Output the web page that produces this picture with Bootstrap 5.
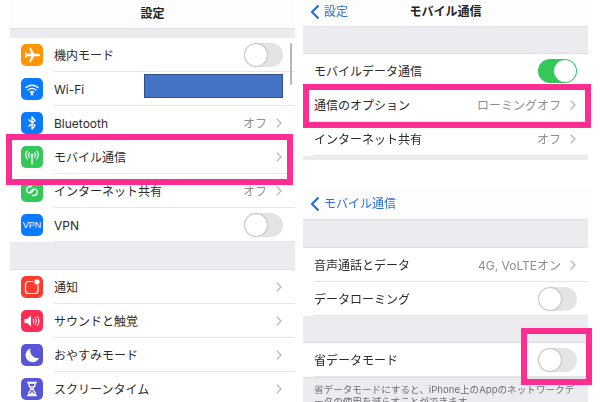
<!DOCTYPE html>
<html lang="ja">
<head>
  <meta charset="UTF-8">
  <title>設定</title>
  <link href="https://cdn.jsdelivr.net/npm/bootstrap@5.3.3/dist/css/bootstrap.min.css" rel="stylesheet">
  <style>
    html, body { height: 402px; overflow: hidden; }
    body { background: #fff; color: #2b2b2b; font-family: Inter, "Noto Sans CJK JP", "Liberation Sans", sans-serif; font-size: 12px; line-height: 1; }
    .stage { width: 600px; height: 402px; overflow: hidden; filter: blur(.3px); }
    .pane { width: 285px; flex: none; }
    .pane-left { margin-left: 10px; margin-right: 8px; }
    .topbar { background: #fdfdfd; border-bottom: 1px solid #e2e2e6; font-weight: 700; font-size: 12px; color: #222; }
    .topbar-a { height: 29px; padding-bottom: 1px; }
    .topbar-b { height: 27px; padding-bottom: 2px; }
    .topbar-c { height: 32px; }
    .back-link { left: 7px; top: 0; bottom: 0; color: #2b6fe0; font-weight: 400; }
    .topbar-b .back-link { padding-bottom: 3px; }
    .gap-xs { height: 9px; background: #ebebf0; }
    .gap-lg { height: 28px; background: #ebebf0; border-bottom: 1px solid #dedee2; }
    .gap-md { height: 27px; background: #ebebf0; border-bottom: 1px solid #dedee2; }
    .gap-sm { height: 4px; background: #ebebf0; }
    .gap-white { height: 28px; background: #fff; }
    .cell { height: 34px; background: #fff; }
    .cell-body { height: 34px; border-bottom: 1px solid #e6e6e8; padding-right: 12px; }
    .cell-body > span:first-child { margin-top: 2px; }
    .cell:last-child .cell-body { border-bottom: 0; }
    .pane-right .cell { padding-left: 11px; }
    .pane-right .cell-body { padding-right: 11px; }
    .app-icon { width: 22px; height: 22px; border-radius: 5px; margin: 0 11px; flex: none; }
    .app-icon svg { display: block; }
    .vpn-text { font-family: "Liberation Sans", sans-serif; font-size: 9px; color: #fff; }
    .c-orange { background: #ff9500; }
    .c-blue { background: #0a7aff; }
    .c-green { background: #34c759; }
    .c-red { background: #ff3b30; }
    .c-pink { background: #ff2d55; }
    .c-indigo { background: #5856d6; }
    .val { color: #8e8e93; margin: 2px 9px 0 0; }
    .chev { margin-right: 1px; }
    .sw { width: 39px; height: 24px; border-radius: 12px; background: #e4e4e6; flex: none; }
    .sw-on { background: #34c759; }
    .sw-knob { width: 22px; height: 22px; border-radius: 50%; background: #fff; box-shadow: 0 0 2px rgba(0,0,0,.45); top: 1px; left: 1px; }
    .sw-on .sw-knob { left: 16px; box-shadow: none; }
    .note { background: #ebebf0; color: #6d6d72; font-size: 9.600px; line-height: 12px; padding: 6px 10px 0 11px; height: 40px; border-top: 1px solid #dedee2; line-break: anywhere; }
    .mark-box { border: 6.500px solid #ff2d92; }
    .mark-a { left: 6px; top: 134px; width: 287px; height: 51px; }
    .mark-b { left: 303px; top: 84px; width: 288px; height: 44px; }
    .mark-c { left: 521px; top: 328px; width: 71px; height: 57px; }
    .hide-rect { left: 144px; top: 74px; width: 139px; height: 24px; background: #4472c4; border: 1.500px solid #2f528f; }
    .scroll-thumb { left: 290px; top: 43px; width: 2px; height: 42px; background: #b5b5b8; border-radius: 1px; }
  </style>
</head>
<body>
  <div class="stage d-flex position-relative">

    <div class="pane pane-left">
      <div class="topbar topbar-a d-flex align-items-center justify-content-center">設定</div>
      <div class="gap-xs"></div>

      <div class="cell d-flex align-items-center">
        <span class="app-icon c-orange d-flex align-items-center justify-content-center">
          <svg width="18" height="18" viewBox="0 0 18 18"><path fill="#fff" d="M17 9c0-.8-.9-1.300-2-1.300h-3.600L7.600 1.600H6.200l1.900 6.100H4.300L3 6H1.900l.7 3-.7 3H3l1.300-1.700h3.800l-1.900 6.100h1.400l3.800-6.100H15c1.100 0 2-.5 2-1.300z"/></svg>
        </span>
        <div class="cell-body flex-grow-1 d-flex align-items-center justify-content-between">
          <span>機内モード</span>
          <span class="sw position-relative"><span class="sw-knob position-absolute"></span></span>
        </div>
      </div>
      <div class="cell d-flex align-items-center">
        <span class="app-icon c-blue d-flex align-items-center justify-content-center">
          <svg width="18" height="18" viewBox="0 0 18 18" fill="none" stroke="#fff" stroke-width="1.500" stroke-linecap="round"><path d="M3 7.500a9 9 0 0 1 12 0"/><path d="M5.200 10a5.700 5.700 0 0 1 7.600 0"/><path d="M7.400 12.300a2.500 2.500 0 0 1 3.200 0"/><circle cx="9" cy="14.300" r=".5" fill="#fff"/></svg>
        </span>
        <div class="cell-body flex-grow-1 d-flex align-items-center"><span>Wi-Fi</span></div>
      </div>
      <div class="cell d-flex align-items-center">
        <span class="app-icon c-blue d-flex align-items-center justify-content-center">
          <svg width="18" height="18" viewBox="0 0 18 18" fill="none" stroke="#fff" stroke-width="1.300" stroke-linejoin="round"><path d="M5.500 5.500 12 11.500 9 15V3l3 3.500-6.500 6"/></svg>
        </span>
        <div class="cell-body flex-grow-1 d-flex align-items-center justify-content-between">
          <span>Bluetooth</span>
          <span class="d-flex align-items-center"><span class="val">オフ</span>
            <svg class="chev" width="6" height="10" viewBox="0 0 6 10" fill="none" stroke="#b8b8bc" stroke-width="1.300"><path d="M.8.8 5 5 .8 9.200"/></svg></span>
        </div>
      </div>
      <div class="cell d-flex align-items-center">
        <span class="app-icon c-green d-flex align-items-center justify-content-center">
          <svg width="18" height="18" viewBox="0 0 18 18" fill="none" stroke="#fff" stroke-width="1.100" stroke-linecap="round"><path d="M9 8.500V16" stroke-width="1.400"/><circle cx="9" cy="7" r="1.300" fill="#fff" stroke="none"/><path d="M6.400 4.800a3.400 3.400 0 0 0 0 4.400M11.600 4.800a3.400 3.400 0 0 1 0 4.400M4.300 3.200a6 6 0 0 0 0 7.600M13.700 3.200a6 6 0 0 1 0 7.600"/></svg>
        </span>
        <div class="cell-body flex-grow-1 d-flex align-items-center justify-content-between">
          <span>モバイル通信</span>
          <svg class="chev" width="6" height="10" viewBox="0 0 6 10" fill="none" stroke="#b8b8bc" stroke-width="1.300"><path d="M.8.8 5 5 .8 9.200"/></svg>
        </div>
      </div>
      <div class="cell d-flex align-items-center">
        <span class="app-icon c-green d-flex align-items-center justify-content-center">
          <svg width="18" height="18" viewBox="0 0 18 18" fill="none" stroke="#fff" stroke-width="1.400" stroke-linecap="round"><path d="M8.500 4.500H7a3.500 3.500 0 0 0-3 5c.8 1.500 3 1.800 4.500.8l2-1.800"/><path d="M9.500 13.500H11a3.500 3.500 0 0 0 3-5c-.8-1.500-3-1.800-4.500-.8l-2 1.800"/></svg>
        </span>
        <div class="cell-body flex-grow-1 d-flex align-items-center justify-content-between">
          <span>インターネット共有</span>
          <span class="d-flex align-items-center"><span class="val">オフ</span>
            <svg class="chev" width="6" height="10" viewBox="0 0 6 10" fill="none" stroke="#b8b8bc" stroke-width="1.300"><path d="M.8.8 5 5 .8 9.200"/></svg></span>
        </div>
      </div>
      <div class="cell d-flex align-items-center">
        <span class="app-icon c-blue d-flex align-items-center justify-content-center"><span class="vpn-text">VPN</span></span>
        <div class="cell-body flex-grow-1 d-flex align-items-center justify-content-between">
          <span>VPN</span>
          <span class="sw position-relative"><span class="sw-knob position-absolute"></span></span>
        </div>
      </div>
      <div class="gap-lg"></div>

      <div class="cell d-flex align-items-center">
        <span class="app-icon c-red d-flex align-items-center justify-content-center">
          <svg width="22" height="22" viewBox="0 0 22 22" fill="none"><rect x="4.500" y="5.500" width="12.500" height="12" rx="3" stroke="#fff" stroke-width="1.200"/><circle cx="16" cy="6" r="3.200" fill="#fff" stroke="#ff3b30"/></svg>
        </span>
        <div class="cell-body flex-grow-1 d-flex align-items-center justify-content-between">
          <span>通知</span>
          <svg class="chev" width="6" height="10" viewBox="0 0 6 10" fill="none" stroke="#b8b8bc" stroke-width="1.300"><path d="M.8.8 5 5 .8 9.200"/></svg>
        </div>
      </div>
      <div class="cell d-flex align-items-center">
        <span class="app-icon c-pink d-flex align-items-center justify-content-center">
          <svg width="18" height="18" viewBox="0 0 18 18" fill="none" stroke="#fff" stroke-width="1"><path fill="#fff" stroke="none" d="M1.500 7H4l4-3.500v11L4 11H1.500z"/><path d="M10 7a3 3 0 0 1 0 4M12 5.500a5.500 5.500 0 0 1 0 7M14 4a8 8 0 0 1 0 10"/></svg>
        </span>
        <div class="cell-body flex-grow-1 d-flex align-items-center justify-content-between">
          <span>サウンドと触覚</span>
          <svg class="chev" width="6" height="10" viewBox="0 0 6 10" fill="none" stroke="#b8b8bc" stroke-width="1.300"><path d="M.8.8 5 5 .8 9.200"/></svg>
        </div>
      </div>
      <div class="cell d-flex align-items-center">
        <span class="app-icon c-indigo d-flex align-items-center justify-content-center">
          <svg width="18" height="18" viewBox="0 0 18 18"><path fill="#fff" d="M7.500 2.500A7 7 0 1 0 16 12 7.500 7.500 0 0 1 7.500 2.500z"/></svg>
        </span>
        <div class="cell-body flex-grow-1 d-flex align-items-center justify-content-between">
          <span>おやすみモード</span>
          <svg class="chev" width="6" height="10" viewBox="0 0 6 10" fill="none" stroke="#b8b8bc" stroke-width="1.300"><path d="M.8.8 5 5 .8 9.200"/></svg>
        </div>
      </div>
      <div class="cell d-flex align-items-center">
        <span class="app-icon c-indigo d-flex align-items-center justify-content-center">
          <svg width="18" height="18" viewBox="0 0 18 18" fill="none" stroke="#fff" stroke-width="1.300" stroke-linecap="round"><path d="M4.500 2.500h9M4.500 15.500h9"/><path d="M6 3v2.500L8.500 9 6 12.500V15h6v-2.500L9.500 9 12 5.500V3z"/><path fill="#fff" stroke="none" d="M6.800 14.500 9 11.500l2.200 3zM7.500 6h3L9 8z"/></svg>
        </span>
        <div class="cell-body flex-grow-1 d-flex align-items-center justify-content-between">
          <span>スクリーンタイム</span>
          <svg class="chev" width="6" height="10" viewBox="0 0 6 10" fill="none" stroke="#b8b8bc" stroke-width="1.300"><path d="M.8.8 5 5 .8 9.200"/></svg>
        </div>
      </div>
    </div>

    <div class="pane pane-right">
      <div class="topbar topbar-b d-flex align-items-center justify-content-center position-relative">
        <span class="back-link position-absolute d-flex align-items-center gap-1">
          <svg width="10" height="16" viewBox="0 0 10 16" fill="none" stroke="#1a6be0" stroke-width="2"><path d="M8.500 1.500 2 8l6.500 6.500"/></svg>設定</span>
        モバイル通信
      </div>
      <div class="gap-md"></div>
      <div class="cell d-flex">
        <div class="cell-body flex-grow-1 d-flex align-items-center justify-content-between">
          <span>モバイルデータ通信</span>
          <span class="sw sw-on position-relative"><span class="sw-knob position-absolute"></span></span>
        </div>
      </div>
      <div class="cell d-flex">
        <div class="cell-body flex-grow-1 d-flex align-items-center justify-content-between">
          <span>通信のオプション</span>
          <span class="d-flex align-items-center"><span class="val">ローミングオフ</span>
            <svg class="chev" width="6" height="10" viewBox="0 0 6 10" fill="none" stroke="#b8b8bc" stroke-width="1.300"><path d="M.8.8 5 5 .8 9.200"/></svg></span>
        </div>
      </div>
      <div class="cell d-flex">
        <div class="cell-body flex-grow-1 d-flex align-items-center justify-content-between">
          <span>インターネット共有</span>
          <span class="d-flex align-items-center"><span class="val">オフ</span>
            <svg class="chev" width="6" height="10" viewBox="0 0 6 10" fill="none" stroke="#b8b8bc" stroke-width="1.300"><path d="M.8.8 5 5 .8 9.200"/></svg></span>
        </div>
      </div>
      <div class="gap-sm"></div>
      <div class="gap-white"></div>
      <div class="topbar topbar-c d-flex align-items-center position-relative">
        <span class="back-link position-absolute d-flex align-items-center gap-1">
          <svg width="10" height="16" viewBox="0 0 10 16" fill="none" stroke="#1a6be0" stroke-width="2"><path d="M8.500 1.500 2 8l6.500 6.500"/></svg>モバイル通信</span>
      </div>
      <div class="gap-lg"></div>
      <div class="cell d-flex">
        <div class="cell-body flex-grow-1 d-flex align-items-center justify-content-between">
          <span>音声通話とデータ</span>
          <span class="d-flex align-items-center"><span class="val">4G, VoLTEオン</span>
            <svg class="chev" width="6" height="10" viewBox="0 0 6 10" fill="none" stroke="#b8b8bc" stroke-width="1.300"><path d="M.8.8 5 5 .8 9.200"/></svg></span>
        </div>
      </div>
      <div class="cell d-flex">
        <div class="cell-body flex-grow-1 d-flex align-items-center justify-content-between">
          <span>データローミング</span>
          <span class="sw position-relative"><span class="sw-knob position-absolute"></span></span>
        </div>
      </div>
      <div class="gap-md"></div>
      <div class="cell d-flex">
        <div class="cell-body flex-grow-1 d-flex align-items-center justify-content-between">
          <span>省データモード</span>
          <span class="sw position-relative"><span class="sw-knob position-absolute"></span></span>
        </div>
      </div>
      <div class="note">省データモードにすると、iPhone上のAppのネットワークデータの使用を減らすことができます。</div>
    </div>

    <div class="scroll-thumb position-absolute"></div>
    <div class="hide-rect position-absolute"></div>
    <div class="mark-box mark-a position-absolute"></div>
    <div class="mark-box mark-b position-absolute"></div>
    <div class="mark-box mark-c position-absolute"></div>
  </div>
  <script src="https://cdn.jsdelivr.net/npm/bootstrap@5.3.3/dist/js/bootstrap.bundle.min.js"></script>
</body>
</html>
